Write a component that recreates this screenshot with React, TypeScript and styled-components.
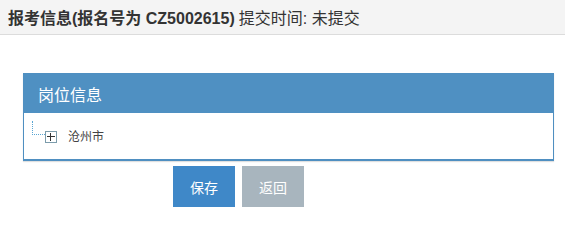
import React from 'react';
import styled, { createGlobalStyle } from 'styled-components';

const GlobalStyle = createGlobalStyle`
  html, body {
    margin: 0;
    padding: 0;
    background: #fff;
  }
  body {
    font-family: "Liberation Sans", "Noto Sans CJK SC", sans-serif;
    color: #333;
  }
`;

const PageHeader = styled.div`
  height: 34px;
  padding: 0 8px;
  display: flex;
  align-items: center;
  background-color: #f4f4f4;
  border-bottom: 1px solid #dcdcdc;
  font-size: 16px;
  color: #333;
  white-space: nowrap;
`;

const Strong = styled.b`
  font-weight: bold;
  margin-right: 4px;
`;

const Content = styled.div`
  padding: 38px 11px 0 23px;
`;

const Panel = styled.div`
  border: 1px solid #4f8fc1;
  border-bottom-width: 2px;
  box-shadow: 0 1px 1px rgba(0, 0, 0, .12);
`;

const PanelHeading = styled.div`
  height: 39px;
  padding: 0 14px;
  display: flex;
  align-items: center;
  background-color: #4f90c2;
  color: #fff;
  font-size: 16px;
`;

const PanelBody = styled.div`
  height: 38px;
  padding: 8px 8px 0;
  background: #fff;
`;

const TreeNode = styled.div`
  display: flex;
  align-items: flex-start;
`;

const Connector = styled.span`
  width: 12px;
  height: 13px;
  border-left: 1px dotted #5aa5d2;
  border-bottom: 1px dotted #5aa5d2;
`;

const Toggle = styled.span`
  margin-top: 10px;
  width: 10px;
  height: 10px;
  border: 1px solid #7c9cab;
  position: relative;
  &::before, &::after {
    content: '';
    position: absolute;
    background: #333;
  }
  &::before {
    left: 1px;
    right: 1px;
    top: 4px;
    height: 1px;
  }
  &::after {
    top: 1px;
    bottom: 1px;
    left: 4px;
    width: 1px;
  }
`;

const NodeLabel = styled.span`
  margin-left: 11px;
  margin-top: 9px;
  font-size: 12px;
  line-height: 14px;
  color: #444;
`;

const Actions = styled.div`
  display: flex;
  gap: 7px;
  padding: 5px 0 0 150px;
`;

const ActionButton = styled.button<{ muted?: boolean }>`
  width: 62px;
  height: 41px;
  border: none;
  padding: 0;
  font-family: inherit;
  font-size: 14px;
  color: #fff;
  background-color: ${({ muted }) => (muted ? '#a8b5be' : '#3f88c8')};
  cursor: pointer;
`;

export default function App() {
  return (
    <>
      <GlobalStyle />
      <PageHeader>
        <Strong>报考信息(报名号为 CZ5002615)</Strong>
        提交时间: 未提交
      </PageHeader>
      <Content>
        <Panel>
          <PanelHeading>岗位信息</PanelHeading>
          <PanelBody>
            <TreeNode>
              <Connector />
              <Toggle />
              <NodeLabel>沧州市</NodeLabel>
            </TreeNode>
          </PanelBody>
        </Panel>
        <Actions>
          <ActionButton>保存</ActionButton>
          <ActionButton muted>返回</ActionButton>
        </Actions>
      </Content>
    </>
  );
}
